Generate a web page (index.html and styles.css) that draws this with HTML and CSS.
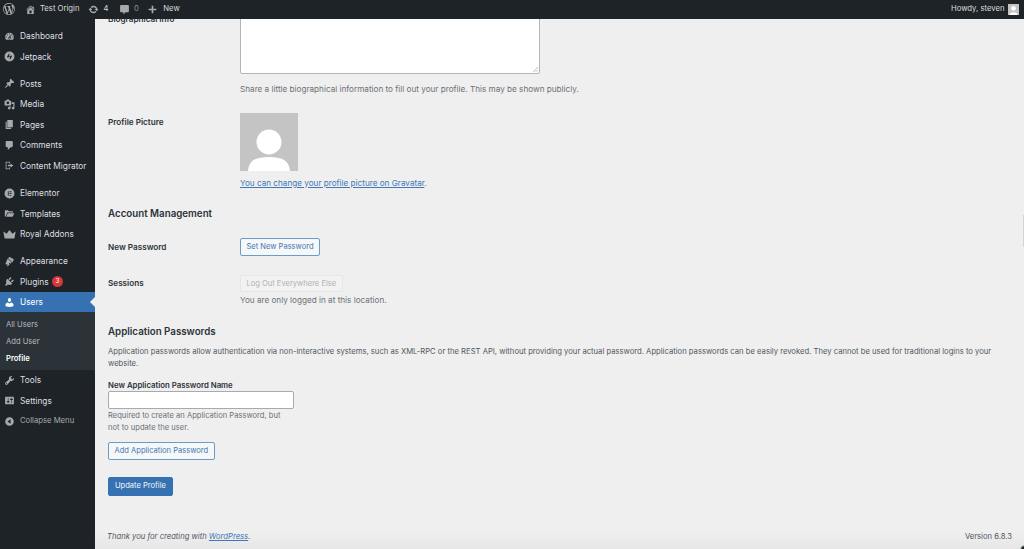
FILE: index.html
```html
<!DOCTYPE html>
<html lang="en">
<head>
<meta charset="utf-8">
<title>Profile</title>
<link rel="stylesheet" href="styles.css">
</head>
<body>
<header class="topbar">
  <div class="bar-left">
    <svg class="bar-logo" viewBox="0 0 20 20"><path d="M20 10c0-5.51-4.49-10-10-10C4.48 0 0 4.49 0 10c0 5.52 4.48 10 10 10 5.51 0 10-4.48 10-10zM7.78 15.37L4.37 6.22c.55-.02 1.17-.08 1.17-.08.5-.06.44-1.13-.06-1.11 0 0-1.45.11-2.37.11-.18 0-.37 0-.58-.01C4.12 2.69 6.87 1.11 10 1.11c2.33 0 4.45.87 6.05 2.34-.68-.11-1.65.39-1.65 1.58 0 .74.45 1.36.9 2.1.35.61.55 1.36.55 2.46 0 1.49-1.4 5-1.4 5l-3.03-8.37c.54-.02.82-.17.82-.17.5-.05.44-1.25-.06-1.22 0 0-1.44.12-2.38.12-.87 0-2.33-.12-2.33-.12-.5-.03-.56 1.2-.06 1.22l.92.08 1.26 3.41zM17.41 10c.24-.64.74-1.87.43-4.25.7 1.29 1.05 2.71 1.05 4.25 0 3.29-1.73 6.24-4.4 7.78.97-2.59 1.94-5.2 2.92-7.78zM6.1 18.09C3.12 16.65 1.11 13.53 1.11 10c0-1.3.23-2.48.72-3.59C3.25 10.3 4.67 14.2 6.1 18.09zm4.03-6.63l2.58 6.98c-.86.29-1.76.45-2.71.45-.79 0-1.57-.11-2.29-.33.81-2.38 1.62-4.74 2.42-7.1z"/></svg>
    <span class="bar-item bar-site"><svg class="bar-icon" viewBox="0 0 20 20"><path d="M16 8.5l1.53 1.53-1.06 1.06L10 4.62l-6.47 6.47-1.06-1.06L10 2.5l4 4v-2h2v4zm-6-2.46l6 5.99V18H4v-5.97zM12 17v-5H8v5h4z"/></svg>Test Origin</span>
    <span class="bar-item bar-updates"><svg class="bar-icon" viewBox="0 0 20 20"><path d="M10.2 3.28c3.53 0 6.43 2.61 6.92 6h2.08l-3.5 4-3.5-4h2.32c-.45-1.97-2.21-3.45-4.32-3.45-1.45 0-2.73.71-3.54 1.78L4.95 5.66C6.23 4.2 8.11 3.28 10.2 3.28zm-.4 13.44c-3.52 0-6.43-2.61-6.92-6H.8l3.5-4c1.17 1.33 2.33 2.67 3.5 4H5.48c.45 1.97 2.21 3.45 4.32 3.45 1.45 0 2.73-.71 3.54-1.78l1.71 1.95c-1.28 1.46-3.15 2.38-5.25 2.38z"/></svg>4</span>
    <span class="bar-item bar-comments"><svg class="bar-icon" viewBox="0 0 20 20"><path d="M4 2h12c1.100 0 2 .9 2 2v9c0 1.100-.9 2-2 2h-4l-4 4v-4H4c-1.100 0-2-.9-2-2V4c0-1.100.9-2 2-2z"/></svg><span class="bar-muted">0</span></span>
    <span class="bar-item bar-new"><svg class="bar-icon" viewBox="0 0 20 20"><path d="M8.500 3h3v5.500H17v3h-5.500V17h-3v-5.500H3v-3h5.500z"/></svg>New</span>
  </div>
  <div class="bar-right">
    <span>Howdy, steven</span>
    <svg class="bar-avatar" viewBox="0 0 58 58"><rect width="58" height="58" fill="#c4c4c4"/><circle cx="29" cy="23" r="12.500" fill="#fff"/><path d="M8 58c1-10 8-15 21-15s20 5 21 15z" fill="#fff"/></svg>
  </div>
</header>

<div class="layout">
  <nav class="sidebar">
    <a class="menu-item"><svg class="menu-icon" viewBox="0 0 20 20"><path d="M3.76 16h12.48c1.1-1.37 1.76-3.11 1.76-5 0-4.42-3.58-8-8-8s-8 3.58-8 8c0 1.89.66 3.63 1.76 5zM10 4c.55 0 1 .45 1 1s-.45 1-1 1-1-.45-1-1 .45-1 1-1zM6 6c.55 0 1 .45 1 1s-.45 1-1 1-1-.45-1-1 .45-1 1-1zm8 0c.55 0 1 .45 1 1s-.45 1-1 1-1-.45-1-1 .45-1 1-1zm-5.37 5.55L12 7v6c0 1.1-.9 2-2 2s-2-.9-2-2c0-.57.24-1.08.63-1.45zM4 10c.55 0 1 .45 1 1s-.45 1-1 1-1-.45-1-1 .45-1 1-1zm12 0c.55 0 1 .45 1 1s-.45 1-1 1-1-.45-1-1 .45-1 1-1zm-5 3c0-.55-.45-1-1-1s-1 .45-1 1 .45 1 1 1 1-.45 1-1z"/></svg>Dashboard</a>
    <a class="menu-item"><svg class="menu-icon" viewBox="0 0 20 20"><path fill-rule="evenodd" d="M10 1a9 9 0 100 18 9 9 0 000-18zM9.500 11.500h-4.500l4.500-8zM10.500 8.500h4.500l-4.500 8z"/></svg>Jetpack</a>
    <div class="menu-sep"></div>
    <a class="menu-item"><svg class="menu-icon" viewBox="0 0 20 20"><path d="M10.44 3.02l1.82-1.82 6.36 6.35-1.83 1.82c-1.05-.68-2.48-.57-3.41.36l-.75.75c-.92.93-1.04 2.35-.35 3.41l-1.83 1.82-2.41-2.41-2.8 2.79c-.42.42-3.38 2.71-3.8 2.29s1.86-3.39 2.28-3.81l2.79-2.79L4.1 9.36l1.83-1.82c1.05.69 2.48.57 3.4-.36l.75-.75c.93-.92 1.05-2.35.36-3.41z"/></svg>Posts</a>
    <a class="menu-item"><svg class="menu-icon" viewBox="0 0 20 20"><path d="M13 11V4c0-.55-.45-1-1-1h-1.670L9 1H5L3.670 3H2c-.55 0-1 .45-1 1v7c0 .55.45 1 1 1h10c.55 0 1-.45 1-1zM7 4.500c1.380 0 2.500 1.120 2.500 2.500S8.380 9.500 7 9.500 4.500 8.380 4.500 7 5.620 4.500 7 4.500zM14 6h5v10.500c0 1.380-1.120 2.500-2.500 2.500S14 17.880 14 16.500s1.120-2.500 2.500-2.500c.17 0 .34.02.5.05V9h-3V6zm-4 8.050V13h2v3.500c0 1.380-1.120 2.500-2.500 2.500S7 17.880 7 16.500 8.120 14 9.500 14c.17 0 .34.02.5.05z"/></svg>Media</a>
    <a class="menu-item"><svg class="menu-icon" viewBox="0 0 20 20"><path d="M6 15V2h10v13H6zm-1 1h8v2H3V5h2v11z"/></svg>Pages</a>
    <a class="menu-item"><svg class="menu-icon" viewBox="0 0 20 20"><path d="M5 2h9c1.100 0 2 .9 2 2v7c0 1.100-.9 2-2 2h-2l-5 5v-5H5c-1.100 0-2-.9-2-2V4c0-1.100.9-2 2-2z"/></svg>Comments</a>
    <a class="menu-item"><svg class="menu-icon" viewBox="0 0 20 20"><path d="M3 3h8v3.500H9.500v-2h-5v11h5v-2H11V17H3zM12 6.500l5 3.500-5 3.500v-2H7v-3h5z"/></svg>Content Migrator</a>
    <div class="menu-sep"></div>
    <a class="menu-item"><svg class="menu-icon" viewBox="0 0 20 20"><path fill-rule="evenodd" d="M10 1a9 9 0 100 18 9 9 0 000-18zM7 6h1.500v8H7zM10 6h3.500v1.500H10zM10 9.250h3.500v1.500H10zM10 12.500h3.500V14H10z"/></svg>Elementor</a>
    <a class="menu-item"><svg class="menu-icon" viewBox="0 0 20 20"><path d="M1.500 5c0-.6.4-1 1-1h4.500l2 2h6.500c.6 0 1 .4 1 1v1H6L3 15.500h-.5c-.6 0-1-.4-1-1zM6.800 9.500h12l-3 6.500H4z"/></svg>Templates</a>
    <a class="menu-item"><svg class="menu-icon menu-icon-wide" viewBox="0 0 20 20"><path d="M.5 5.500l5 3.500L10 3l4.500 6 5-3.500L17.500 16h-15z"/></svg>Royal Addons</a>
    <div class="menu-sep"></div>
    <a class="menu-item"><svg class="menu-icon" viewBox="0 0 20 20"><path d="M14.480 11.060L7.410 3.990l1.500-1.500c.5-.56 2.300-.47 3.590.32 1.280.79 1.490 1.990 1.490 1.990 1.800-.5 3.600 1 3.600 1l-.6 2.200c-.5 2-1.500 3-2.510 4.060zM6.700 4.700l7.070 7.070-2.120 2.120-1.410-1.410-1.410 1.410 1.410 1.410-3.540 3.540-1.410-1.410 1.410-1.410-1.410-1.410-1.420 1.410L2.460 14.600z"/></svg>Appearance</a>
    <a class="menu-item"><svg class="menu-icon" viewBox="0 0 20 20"><path d="M13.110 4.360L9.870 7.600 8 5.730l3.240-3.240c.35-.34 1.050-.2 1.560.32.52.51.66 1.210.31 1.550zm-8 1.770l.91-1.120 9.010 9.010-1.190.84c-.71.71-2.630 1.160-3.820 1.160H6.140L4.900 17.260c-.59.59-1.540.59-2.120 0-.59-.58-.59-1.530 0-2.120l1.240-1.240v-3.880c0-1.130.4-3.190 1.090-3.890zm7.260 3.970l3.240-3.240c.34-.35 1.040-.21 1.550.31.52.51.66 1.210.31 1.550l-3.240 3.250z"/></svg>Plugins<span class="badge">3</span></a>
    <a class="menu-item menu-current"><svg class="menu-icon" viewBox="0 0 20 20"><path d="M10 9.250c-2.270 0-2.730-3.440-2.730-3.440C7 4.020 7.820 2 9.970 2c2.160 0 2.980 2.020 2.710 3.810 0 0-.41 3.440-2.680 3.440zm0 2.570L12.720 10c2.390 0 4.520 2.330 4.520 4.530v2.490s-3.650 1.130-7.240 1.130c-3.650 0-7.240-1.130-7.240-1.130v-2.490c0-2.250 1.940-4.480 4.470-4.480z"/></svg>Users</a>
    <div class="submenu">
      <a class="sub-item">All Users</a>
      <a class="sub-item">Add User</a>
      <a class="sub-item sub-current">Profile</a>
    </div>
    <a class="menu-item"><svg class="menu-icon" viewBox="0 0 20 20"><path d="M16.680 9.770c-1.340 1.340-3.300 1.670-4.950.99l-5.410 6.520c-.99.99-2.590.99-3.580 0s-.99-2.590 0-3.570l6.520-5.420c-.68-1.650-.35-3.610.99-4.950 1.280-1.280 3.120-1.620 4.720-1.060l-2.890 2.890 2.820 2.820 2.860-2.870c.53 1.580.18 3.390-1.080 4.650zM3.810 16.210c.4.39 1.040.39 1.430 0 .4-.4.4-1.040 0-1.430-.39-.4-1.030-.4-1.430 0-.39.39-.39 1.030 0 1.430z"/></svg>Tools</a>
    <a class="menu-item"><svg class="menu-icon" viewBox="0 0 20 20"><path d="M18 16V4c0-.55-.45-1-1-1H3c-.55 0-1 .45-1 1v12c0 .55.45 1 1 1h14c.55 0 1-.45 1-1zM8 11h1c.55 0 1 .45 1 1s-.45 1-1 1H8v1.500c0 .28-.22.5-.5.5s-.5-.22-.5-.5V13H6c-.55 0-1-.45-1-1s.45-1 1-1h1V5.500c0-.28.22-.5.5-.5s.5.22.5.5V11zm5-2h-1c-.55 0-1-.45-1-1s.45-1 1-1h1V5.500c0-.28.22-.5.5-.5s.5.22.5.5V7h1c.55 0 1 .45 1 1s-.45 1-1 1h-1v5.500c0 .28-.22.5-.5.5s-.5-.22-.5-.5V9z"/></svg>Settings</a>
    <a class="menu-item menu-collapse"><svg class="menu-icon" viewBox="0 0 20 20"><path d="M10 2.160c4.330 0 7.840 3.510 7.840 7.840s-3.510 7.840-7.840 7.840S2.160 14.330 2.160 10 5.710 2.160 10 2.160zm2 11.720V6.120L6.180 9.970z"/></svg>Collapse Menu</a>
  </nav>

  <main class="content">
    <div class="form-area">
      <section class="row row-bio">
        <div class="row-label label-bio">Biographical Info</div>
        <div>
          <div class="textarea"><svg class="grip" viewBox="0 0 6 6"><path d="M6 0L0 6M6 3L3 6" stroke="#8c8f94" stroke-width=".7" fill="none"/></svg></div>
          <p class="desc desc-bio">Share a little biographical information to fill out your profile. This may be shown publicly.</p>
        </div>
      </section>
      <section class="row row-picture">
        <div class="row-label">Profile Picture</div>
        <div>
          <svg class="avatar" viewBox="0 0 58 58"><rect width="58" height="58" fill="#c4c4c4"/><circle cx="29" cy="29" r="12.500" fill="#fff"/><path d="M8 58c1-11 8-14 21-14s20 3 21 14z" fill="#fff"/></svg>
          <p class="desc desc-picture"><a class="link">You can change your profile picture on Gravatar</a>.</p>
        </div>
      </section>
      <h2 class="heading heading-account">Account Management</h2>
      <section class="row row-password">
        <div class="row-label">New Password</div>
        <div><button class="btn">Set New Password</button></div>
      </section>
      <section class="row row-sessions">
        <div class="row-label">Sessions</div>
        <div>
          <button class="btn btn-disabled" disabled>Log Out Everywhere Else</button>
          <p class="desc desc-sessions">You are only logged in at this location.</p>
        </div>
      </section>
      <h2 class="heading heading-app">Application Passwords</h2>
      <p class="app-intro">Application passwords allow authentication via non-interactive systems, such as XML-RPC or the REST API, without providing your actual password. Application passwords can be easily revoked. They cannot be used for traditional logins to your website.</p>
      <label class="app-label">New Application Password Name</label>
      <div class="input"></div>
      <p class="desc desc-app">Required to create an Application Password, but not to update the user.</p>
      <button class="btn btn-add">Add Application Password</button>
      <button class="btn btn-primary">Update Profile</button>
    </div>
    <footer class="footer">
      <span class="thanks">Thank you for creating with <a class="link">WordPress</a>.</span>
      <span class="version">Version 6.8.3</span>
    </footer>
    <div class="edge-mark"></div>
  </main>
</div>
</body>
</html>
```

FILE: styles.css
```css
* { box-sizing: border-box; }
html, body { height: 100%; margin: 0; }
body {
  display: flex;
  flex-direction: column;
  overflow: hidden;
  background: #efeff0;
  color: #2c3338;
  font-family: Inter, "Liberation Sans", sans-serif;
  font-size: 8.17px;
  line-height: 12px;
}
p { margin: 0; }
a { color: inherit; text-decoration: none; }

.topbar {
  flex: 0 0 18.5px;
  display: flex;
  justify-content: space-between;
  align-items: center;
  padding: 0 5.5px 0 3px;
  background: #1d2327;
  color: #dcdcde;
  font-size: 7.7px;
  position: relative;
  z-index: 2;
}
.bar-left, .bar-right, .bar-item { display: flex; align-items: center; }
.bar-logo { width: 12px; height: 12px; fill: #a7aaad; }
.bar-icon { width: 11px; height: 11px; fill: #a7aaad; margin-right: 4px; }
.bar-site { margin-left: 10px; }
.bar-updates { margin-left: 9px; }
.bar-comments { margin-left: 10.5px; }
.bar-new { margin-left: 8.5px; }
.bar-new .bar-icon { margin-right: 5px; }
.bar-muted { color: #8c8f94; }
.bar-right { gap: 3px; }
.bar-avatar { width: 11px; height: 11px; }

.layout { flex: 1; display: flex; min-height: 0; position: relative; }

.sidebar {
  flex: 0 0 95px;
  background: #1d2327;
  padding-top: 7.6px;
  color: #dfdfe1;
}
.menu-item {
  display: flex;
  align-items: center;
  height: 20.5px;
  padding-left: 4px;
  font-size: 8.3px;
}
.menu-icon {
  flex: none;
  width: 11px;
  height: 11px;
  margin-right: 5px;
  fill: #a7aaad;
}
.menu-icon-wide { width: 13px; height: 13px; margin: 0 4px 0 -1px; }
.menu-sep { height: 6.6px; }
.menu-current {
  position: relative;
  background: #3672b1;
  color: #fff;
}
.menu-current .menu-icon { fill: #fff; }
.menu-current::after {
  content: "";
  position: absolute;
  right: 0;
  top: 5.5px;
  border: 5px solid transparent;
  border-right-color: #efeff0;
  border-left-width: 0;
}
.menu-collapse { color: #a7aaad; font-size: 7.7px; }
.badge {
  display: inline-block;
  width: 11px;
  height: 11px;
  margin-left: 3.5px;
  border-radius: 50%;
  background: #d63638;
  color: #fff;
  font-size: 6.5px;
  line-height: 11px;
  text-align: center;
}
.submenu {
  height: 57.5px;
  padding-top: 4px;
  background: #2c3338;
  color: #b8babd;
}
.sub-item {
  display: block;
  height: 17px;
  padding-left: 6px;
  font-size: 7.6px;
  line-height: 17px;
}
.sub-current { color: #fff; font-weight: 600; }

.content {
  flex: 1;
  min-width: 0;
  display: flex;
  flex-direction: column;
  overflow: hidden;
}
.form-area {
  padding-left: 13px;
  padding-right: 20px;
}
.row {
  display: grid;
  grid-template-columns: 132px 1fr;
}
.row-label {
  font-weight: 600;
  color: #2c3338;
  padding-top: 2.5px;
}
.row-bio { margin-top: -34.5px; }
.label-bio { padding-top: 29px; }
.textarea {
  position: relative;
  width: 300px;
  height: 90px;
  background: #fff;
  border: 1px solid #b4b5b7;
  border-radius: 2px;
}
.grip {
  position: absolute;
  right: 1px;
  bottom: 1px;
  width: 5px;
  height: 5px;
}
.desc { color: #6c7176; }
.desc-bio { margin-top: 8.5px; }
.row-picture { margin-top: 18.5px; }
.avatar { display: block; width: 58px; height: 58px; }
.desc-picture { margin-top: 5.5px; }
.link { color: #3f78b5; text-decoration: underline; }
.heading {
  margin: 0;
  font-size: 9.75px;
  line-height: 14px;
  font-weight: 600;
  color: #2c3338;
}
.heading-account { margin-top: 18.5px; }
.row-password { margin-top: 17px; }
.row-sessions { margin-top: 18.5px; }
.btn {
  display: block;
  height: 18px;
  padding: 0 5.5px;
  border: 1px solid #6c9ac9;
  border-radius: 2px;
  background: #f6f7f7;
  color: #3f78b5;
  font: inherit;
  font-size: 7.55px;
  line-height: 16px;
}
.btn-disabled {
  height: 17.5px;
  border-color: #e6e6e7;
  background: #f2f2f3;
  color: #b0b2b5;
}
.desc-sessions { margin-top: 2px; }
.heading-app { margin-top: 19px; }
.app-intro { margin-top: 7px; color: #50575e; font-size: 7.66px; }
.app-label {
  display: block;
  margin-top: 9px;
  font-weight: 600;
  color: #2c3338;
  font-size: 7.8px;
}
.input {
  width: 186px;
  height: 18px;
  background: #fff;
  border: 1px solid #a8a9ab;
  border-radius: 2px;
}
.desc-app { margin-top: 1px; width: 178px; font-size: 7.6px; }
.btn-add { margin-top: 7.5px; }
.btn-primary {
  margin-top: 17.5px;
  height: 18.5px;
  padding: 0 6px;
  border-color: #3672b1;
  background: #3672b1;
  color: #f4f7fb;
}
.footer {
  margin-top: auto;
  display: flex;
  justify-content: space-between;
  padding: 0 12px 6px 12px;
  color: #50575e;
  font-size: 7.65px;
  background:
    radial-gradient(circle at 100% 100%, #1d2327 0, #1d2327 2px, transparent 4px),
    linear-gradient(to bottom, transparent 0, #e6e6e7 100%);
}
.thanks { font-style: italic; }
.edge-mark {
  position: absolute;
  right: 0;
  top: 196px;
  width: 1px;
  height: 32px;
  background: #d4d4d6;
}
```
